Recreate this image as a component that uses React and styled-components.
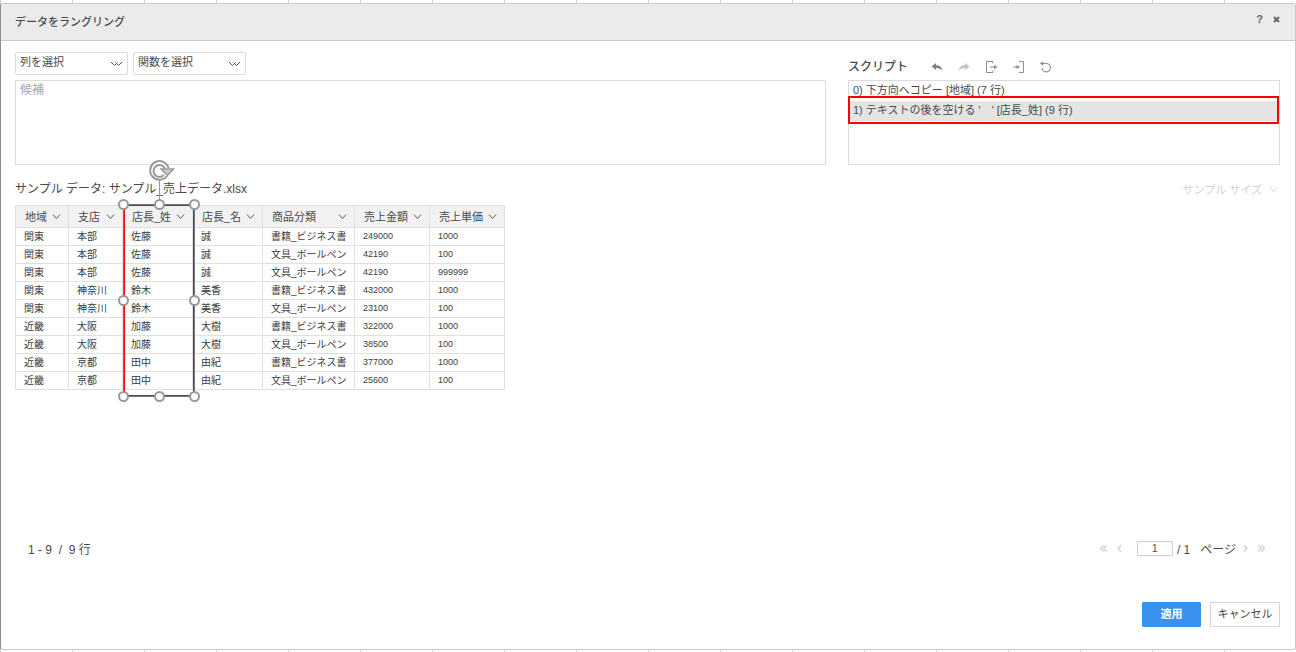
import React, { useState } from "react";
import styled, { createGlobalStyle, css } from "styled-components";

const GlobalStyle = createGlobalStyle`
* {
    box-sizing: border-box;
}
body {
    margin: 0;
    color: #4a4a4a;
    background: #fff;
    font-family: "Liberation Sans", "Noto Sans CJK JP", sans-serif;
    font-size: 11px;
}
button, input, select, textarea {
    font-family: inherit;
    color: inherit;
    margin: 0;
}
`

/* the worksheet peeks out above and below the dialog */
const Sheet = styled.div`
min-height: 100vh;
display: flex;
flex-direction: column;
padding: 3px 0 2px;
background: repeating-linear-gradient(to right, #cfcfcf 0, #cfcfcf 1px, #fff 1px, #fff 72px);
`

const Dialog = styled.section`
flex: 1;
display: flex;
flex-direction: column;
background: #fff;
border: 1px solid #c8c8c8;
border-left-color: #8e8e8e;
border-radius: 3px;
`

const Header = styled.header`
display: flex;
justify-content: space-between;
height: 37px;
padding: 0 14px;
background: #ebebeb;
border-bottom: 1px solid #c8c8c8;
border-radius: 2px 2px 0 0;
`

const Title = styled.h1`
margin: 0;
font-size: 11px;
font-weight: 500;
line-height: 37px;
`

const HeaderTools = styled.div`
display: flex;
gap: 8px;
padding-top: 8px;
`

const IconButton = styled.button`
display: flex;
align-items: center;
justify-content: center;
width: ${props => props.$width || 14}px;
height: 14px;
padding: 0;
border: 0;
background: none;
color: ${props => props.$color || "#8f8f8f"};
font-size: 11px;
font-weight: bold;
line-height: 14px;
`

const Panels = styled.div`
display: grid;
grid-template-columns: 1fr 432px;
column-gap: 22px;
padding: 11px 15px 0 14px;
`

const Panel = styled.div`
display: flex;
flex-direction: column;
gap: 5px;
`

const Bar = styled.div`
display: flex;
align-items: center;
height: 23px;
gap: ${props => props.$gap}px;
padding-top: ${props => props.$drop || 0}px;
`

const SelectBox = styled.div`
display: flex;
align-items: center;
width: 113px;
height: 23px;
border: 1px solid #dcdcdc;
border-radius: 2px;

& > select {
    flex: 1;
    min-width: 0;
    height: 21px;
    padding: 0 0 3px 4px;
    border: 0;
    background: none;
    appearance: none;
    font-size: 11px;
}
& > svg {
    margin-right: 3px;
}
`

const Suggestions = styled.textarea`
display: block;
width: 100%;
height: 85px;
padding: 0 4px;
border: 1px solid #dcdcdc;
resize: none;
font-size: 12px;
line-height: 18px;

&::placeholder {
    color: #a6a6a6;
    opacity: 1;
}
`

const ScriptTitle = styled.h2`
margin: 0 9px 0 0;
font-size: 12px;
font-weight: 500;
line-height: 18px;
`

const ScriptList = styled.ol`
position: relative;
height: 85px;
margin: 0;
padding: 0;
list-style: none;
border: 1px solid #dcdcdc;
`

const ScriptStep = styled.li`
height: 20px;
padding: 0 4px;
font-size: 11px;
line-height: 18px;
white-space: pre;
background: ${props => props.$active ? "#e4e4e4" : "transparent"};
`

const Highlight = styled.div`
position: absolute;
left: -1px;
right: 0;
top: 15px;
height: 28px;
border: 2px solid #f00;
`

const SampleBar = styled.div`
display: flex;
align-items: center;
justify-content: space-between;
height: 40px;
padding: 8px 17px 0 14px;
`

const SampleName = styled.h2`
margin: 0;
padding-bottom: 3px;
font-size: 12px;
font-weight: 400;
`

const SampleSize = styled.button`
display: flex;
align-items: center;
gap: 7px;
padding: 0;
border: 0;
background: none;
color: #d2d2d2;
font-size: 11px;
`

const TableArea = styled.div`
flex: 1;
padding: 0 14px;
`

const TableWrap = styled.div`
position: relative;
width: 490px;
`

const Table = styled.table`
width: 490px;
table-layout: fixed;
border-collapse: collapse;
`

const Th = styled.th`
height: 22px;
padding: 0 7px 0 9px;
border: 1px solid #e0e0e0;
background: #f2f2f2;
font-size: 11px;
font-weight: 400;
line-height: 20px;

& > div {
    display: flex;
    align-items: center;
    justify-content: space-between;
}
`

const Td = styled.td`
height: 18px;
padding: 0 0 0 8px;
border: 1px solid #e0e0e0;
color: #3c3c3c;
font-size: 10px;
line-height: 17px;
white-space: nowrap;
${props => props.$num && css`
    font-size: 9px;
`}
`

const Selection = styled.svg`
position: absolute;
left: 84px;
top: -49px;
pointer-events: none;
`

const Pager = styled.div`
display: flex;
align-items: center;
justify-content: space-between;
height: 20px;
padding: 0 27px 2px;
font-size: 12px;
white-space: pre;
`

const PageNav = styled.nav`
display: flex;
align-items: center;
gap: 2px;
`

const PageLabel = styled.label`
display: flex;
align-items: center;
gap: 4px;
margin-left: 8px;
`

const PageInput = styled.input`
width: 36px;
height: 15px;
padding: 0;
border: 1px solid #cfcfcf;
border-radius: 1px;
font-size: 10px;
text-align: center;
`

const Footer = styled.footer`
display: flex;
justify-content: flex-end;
gap: 9px;
padding: 43px 15px 22px;
`

const Button = styled.button`
width: ${props => props.$primary ? 59 : 70}px;
height: 25px;
padding: 0;
border: 1px solid ${props => props.$primary ? "#3a92ee" : "#d4d4d4"};
border-radius: 1px;
background: ${props => props.$primary ? "#3a92ee" : "#fff"};
color: ${props => props.$primary ? "#fff" : "#454545"};
font-size: 11px;
font-weight: ${props => props.$primary ? 700 : 400};
line-height: 21px;
`

const columns = [
    { name: "地域", width: 53 },
    { name: "支店", width: 54 },
    { name: "店長_姓", width: 70 },
    { name: "店長_名", width: 70 },
    { name: "商品分類", width: 92 },
    { name: "売上金額", width: 75, num: true },
    { name: "売上単価", width: 75, num: true },
]

const rows = [
    ["関東", "本部", "佐藤", "誠", "書籍_ビジネス書", "249000", "1000"],
    ["関東", "本部", "佐藤", "誠", "文具_ボールペン", "42190", "100"],
    ["関東", "本部", "佐藤", "誠", "文具_ボールペン", "42190", "999999"],
    ["関東", "神奈川", "鈴木", "美香", "書籍_ビジネス書", "432000", "1000"],
    ["関東", "神奈川", "鈴木", "美香", "文具_ボールペン", "23100", "100"],
    ["近畿", "大阪", "加藤", "大樹", "書籍_ビジネス書", "322000", "1000"],
    ["近畿", "大阪", "加藤", "大樹", "文具_ボールペン", "38500", "100"],
    ["近畿", "京都", "田中", "由紀", "書籍_ビジネス書", "377000", "1000"],
    ["近畿", "京都", "田中", "由紀", "文具_ボールペン", "25600", "100"],
]

const handles = [[24, 48], [60, 48], [95, 48], [24, 144], [95, 144], [24, 240], [60, 240], [95, 240]]

const Chevron = ({ color = "#5a5a5a" }) => (
    <svg width="9" height="9" viewBox="0 0 9 9" fill="none" stroke={color}>
        <path d="M1 2.5 4.5 6.5 8 2.5" />
    </svg>
)

const DoubleChevron = () => (
    <svg width="14" height="9" viewBox="0 0 14 9" fill="none" stroke="#555">
        <path d="M1 3 4.5 6.5 7.5 3.5M5.5 3.5 8.5 6.5 12 3" />
    </svg>
)

const PageArrow = ({ double, flip }) => (
    <svg width="9" height="9" viewBox="0 0 9 9" fill="none" stroke="#cdcdcd" strokeWidth="1.2">
        <path
            d={double ? "M4.5 1.5 1.5 4.5 4.5 7.5M7.5 1.5 4.5 4.5 7.5 7.5" : "M6 1.5 3 4.5 6 7.5"}
            transform={flip ? "translate(9 0) scale(-1 1)" : undefined}
        />
    </svg>
)

function Dropdown({ label }) {
    return (
        <SelectBox>
            <select aria-label={label}>
                <option>{label}</option>
            </select>
            <DoubleChevron />
        </SelectBox>
    )
}

function ScriptTools() {
    return (
        <>
            <IconButton aria-label="元に戻す" $color="#808080">
                <svg width="12" height="10" viewBox="0 0 12 10" fill="currentColor">
                    <path d="M.5 4.5 5 1v2.2c3.500 0 6 1.800 6.500 5.800C10 6.800 8 6 5 6v2z" />
                </svg>
            </IconButton>
            <IconButton aria-label="やり直し" $color="#c4c4c4">
                <svg width="12" height="10" viewBox="0 0 12 10" fill="currentColor">
                    <path d="M11.5 4.5 7 1v2.2C3.5 3.2 1 5 .5 9 2 6.8 4 6 7 6v2z" />
                </svg>
            </IconButton>
            <IconButton aria-label="エクスポート">
                <svg width="13" height="12" viewBox="0 0 13 12" fill="none" stroke="currentColor">
                    <path d="M8 2.500V.5H1.500v11H8v-2M5 6h5" />
                    <path d="M9 3.800 12.500 6 9 8.200z" fill="currentColor" stroke="none" />
                </svg>
            </IconButton>
            <IconButton aria-label="インポート">
                <svg width="13" height="12" viewBox="0 0 13 12" fill="none" stroke="currentColor">
                    <path d="M7 .5h4.500v11H7M1 6h5" />
                    <path d="M4.500 3.800 8 6 4.500 8.200z" fill="currentColor" stroke="none" />
                </svg>
            </IconButton>
            <IconButton aria-label="リセット">
                <svg width="13" height="12" viewBox="0 0 13 12" fill="none" stroke="currentColor" strokeWidth="1.2">
                    <path d="M3 2.500h4.200a4.200 4.200 0 1 1-4.200 4.500" />
                    <path d="M.8 2.500 4.300 .2v4.600z" fill="currentColor" stroke="none" />
                </svg>
            </IconButton>
        </>
    )
}

function ColumnSelection() {
    return (
        <Selection width="110" height="250" viewBox="0 0 110 250" fill="none">
            <path d="M25.5 49.5h69v190h-69z" stroke="#f00" />
            <path d="M24.5 48.5h71v192h-71z" stroke="#777" />
            <path d="M60.5 23v25" stroke="#999" />
            <circle cx="60.5" cy="14.5" r="9" fill="#fff" />
            <path d="M68 20A9.3 9.3 0 1 1 69.5 12M65 19a6 6 0 1 1 1-6.5" stroke="#999" strokeWidth="2" />
            <path d="M62 13h12.5l-6 6.5z" fill="#ccc" stroke="#999" strokeWidth="1.5" />
            {handles.map(([x, y]) => (
                <circle key={`${x}-${y}`} cx={x + 0.5} cy={y + 0.5} r="4.5" fill="#fff" stroke="#999" strokeWidth="2" />
            ))}
        </Selection>
    )
}

function SampleTable() {
    return (
        <TableWrap>
            <Table>
                <colgroup>
                    {columns.map(col => <col key={col.name} style={{ width: col.width }} />)}
                </colgroup>
                <thead>
                    <tr>
                        {columns.map(col => (
                            <Th key={col.name}><div>{col.name}<Chevron /></div></Th>
                        ))}
                    </tr>
                </thead>
                <tbody>
                    {rows.map((row, i) => (
                        <tr key={i}>
                            {row.map((cell, j) => <Td key={j} $num={columns[j].num}>{cell}</Td>)}
                        </tr>
                    ))}
                </tbody>
            </Table>
            <ColumnSelection />
        </TableWrap>
    )
}

export default function App() {
    const [page, setPage] = useState("1")

    return (
        <Sheet>
            <GlobalStyle />
            <Dialog>
                <Header>
                    <Title>データをラングリング</Title>
                    <HeaderTools>
                        <IconButton $width={9} $color="#666" aria-label="ヘルプ">?</IconButton>
                        <IconButton $width={9} $color="#666" aria-label="閉じる">
                            <svg width="7" height="7" viewBox="0 0 7 7" stroke="currentColor" strokeWidth="2">
                                <path d="M1 1l5 5M6 1 1 6" />
                            </svg>
                        </IconButton>
                    </HeaderTools>
                </Header>
                <Panels>
                    <Panel>
                        <Bar $gap={5}>
                            <Dropdown label="列を選択" />
                            <Dropdown label="関数を選択" />
                        </Bar>
                        <Suggestions placeholder="候補" aria-label="候補" readOnly />
                    </Panel>
                    <Panel>
                        <Bar $gap={13} $drop={6}>
                            <ScriptTitle>スクリプト</ScriptTitle>
                            <ScriptTools />
                        </Bar>
                        <ScriptList>
                            <ScriptStep>0) 下方向へコピー [地域] (7 行)</ScriptStep>
                            <ScriptStep $active>1) テキストの後を空ける '　' [店長_姓] (9 行)</ScriptStep>
                            <Highlight />
                        </ScriptList>
                    </Panel>
                </Panels>
                <SampleBar>
                    <SampleName>サンプル データ: サンプル_売上データ.xlsx</SampleName>
                    <SampleSize>サンプル サイズ<Chevron color="#d2d2d2" /></SampleSize>
                </SampleBar>
                <TableArea>
                    <SampleTable />
                </TableArea>
                <Pager>
                    <span>1 - 9  /  9 行</span>
                    <PageNav>
                        <IconButton aria-label="最初のページ"><PageArrow double /></IconButton>
                        <IconButton aria-label="前のページ"><PageArrow /></IconButton>
                        <PageLabel>
                            <PageInput value={page} onChange={e => setPage(e.target.value)} />
                            / 1   ページ
                        </PageLabel>
                        <IconButton aria-label="次のページ"><PageArrow flip /></IconButton>
                        <IconButton aria-label="最後のページ"><PageArrow double flip /></IconButton>
                    </PageNav>
                </Pager>
                <Footer>
                    <Button $primary>適用</Button>
                    <Button>キャンセル</Button>
                </Footer>
            </Dialog>
        </Sheet>
    )
}
